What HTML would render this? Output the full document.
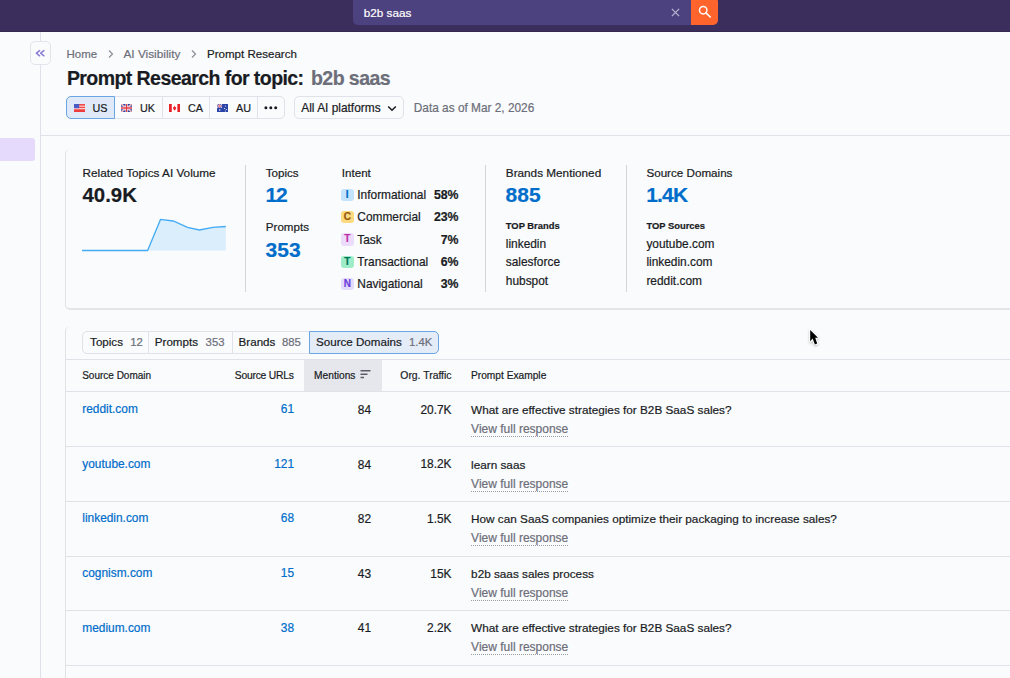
<!DOCTYPE html><html><head><meta charset="utf-8"><style>
    html,body{margin:0;padding:0;width:1010px;height:678px;overflow:hidden;background:#fafbfd;font-family:"Liberation Sans",sans-serif;}
    .t{position:absolute;line-height:1;white-space:nowrap;-webkit-text-stroke:0.2px currentColor;}
    .r{position:absolute;box-sizing:border-box;}
    svg{position:absolute;}
    </style></head><body>
    <div class="r" style="left:0px;top:0px;width:1010px;height:32px;background:#3b2e5d;"></div>
<div class="r" style="left:0px;top:31px;width:1010px;height:1px;background:#34284f;"></div>
<div class="r" style="left:353px;top:-5px;width:365px;height:29.7px;background:#4d4280;border-radius:5px;"></div>
<div class="r" style="left:691px;top:-3px;width:27px;height:27.7px;background:#ff642d;border-radius:0 5px 5px 0;"></div>
<div class="t" style="top:6.50px;font-size:11.7px;color:#ffffff;left:363.80px;">b2b saas</div>
<svg style="left:671px;top:8px" width="9" height="9" viewBox="0 0 9 9"><path d="M0.9 0.9L8.1 8.1M8.1 0.9L0.9 8.1" stroke="#b7b3cc" stroke-width="1.3"/></svg>
<svg style="left:697px;top:4px" width="16" height="16" viewBox="0 0 16 16"><circle cx="6.2" cy="6.2" r="3.7" fill="none" stroke="#fff" stroke-width="1.5"/><path d="M8.9 8.9L13.3 13" stroke="#fff" stroke-width="1.6" stroke-linecap="round"/></svg>
<div class="r" style="left:40px;top:32px;width:1px;height:646px;background:#e0e1e9;"></div>
<div class="r" style="left:0px;top:138px;width:35px;height:22.5px;background:#e5dafc;border-radius:0 3px 3px 0;"></div>
<div class="r" style="left:30px;top:41px;width:20.5px;height:24px;background:#fafbfd;border:1px solid #e3e4eb;border-radius:5px;"></div>
<svg style="left:34px;top:47px" width="12" height="12" viewBox="0 0 12 12"><path d="M5.6 3.6L2.4 6.2L5.6 8.8M9.9 3.6L6.7 6.2L9.9 8.8" fill="none" stroke="#8c7cd6" stroke-width="1.5" stroke-linecap="round" stroke-linejoin="round"/></svg>
<div class="t" style="top:48.60px;font-size:11.45px;color:#6c6e79;left:66.60px;">Home</div>
<svg style="left:107px;top:49px" width="8" height="10" viewBox="0 0 8 10"><path d="M2 1.5L5.5 5L2 8.5" fill="none" stroke="#8b8d98" stroke-width="1.2"/></svg>
<div class="t" style="top:48.60px;font-size:11.8px;color:#6c6e79;left:123.50px;">AI Visibility</div>
<svg style="left:190px;top:49px" width="8" height="10" viewBox="0 0 8 10"><path d="M2 1.5L5.5 5L2 8.5" fill="none" stroke="#8b8d98" stroke-width="1.2"/></svg>
<div class="t" style="top:48.60px;font-size:11.55px;color:#191b23;left:207.00px;">Prompt Research</div>
<div class="t" style="top:69.40px;font-size:19.5px;color:#191b23;font-weight:700;letter-spacing:-0.567px;left:66.90px;">Prompt Research for topic:</div>
<div class="t" style="top:69.40px;font-size:19.53px;color:#6c6e79;font-weight:700;letter-spacing:-0.569px;left:311.00px;">b2b saas</div>
<div class="r" style="left:66px;top:96px;width:219px;height:23px;border:1px solid #e0e1e9;border-radius:5px;background:#fafbfd;"></div>
<div class="r" style="left:66px;top:96px;width:48.5px;height:23px;border:1px solid #6aa5e4;border-radius:5px 0 0 5px;background:#dfe9f8;"></div>
<div class="r" style="left:162px;top:97px;width:1px;height:21px;background:#e0e1e9;"></div>
<div class="r" style="left:209px;top:97px;width:1px;height:21px;background:#e0e1e9;"></div>
<div class="r" style="left:257px;top:97px;width:1px;height:21px;background:#e0e1e9;"></div>
<svg style="left:73.5px;top:104px" width="11.2" height="8" viewBox="0 0 12 8" preserveAspectRatio="none"><rect width="12" height="8" fill="#f24a4a"/><rect y="1.6" width="12" height="1.2" fill="#fbd0d0"/><rect y="4" width="12" height="1.2" fill="#fbd0d0"/><rect y="6.4" width="12" height="1.6" fill="#f03a3a"/><rect width="5.5" height="4.2" fill="#4a5bc4"/></svg>
<div class="t" style="top:102.50px;font-size:10.8px;color:#191b23;left:92.50px;">US</div>
<svg style="left:121px;top:104px" width="11.2" height="8" viewBox="0 0 12 8" preserveAspectRatio="none"><rect width="12" height="8" fill="#2b3f9e"/><path d="M0 0L12 8M12 0L0 8" stroke="#fff" stroke-width="1.6"/><path d="M0 0L12 8M12 0L0 8" stroke="#e23b4a" stroke-width="0.6"/><path d="M6 0V8M0 4H12" stroke="#fff" stroke-width="2.4"/><path d="M6 0V8M0 4H12" stroke="#e23b4a" stroke-width="1.3"/></svg>
<div class="t" style="top:102.50px;font-size:10.8px;color:#191b23;left:140.00px;">UK</div>
<svg style="left:169px;top:104px" width="11.2" height="8" viewBox="0 0 12 8" preserveAspectRatio="none"><rect width="12" height="8" fill="#fff"/><rect width="3" height="8" fill="#e8202a"/><rect x="9" width="3" height="8" fill="#e8202a"/><path d="M6 1.6L6.8 3.2L7.8 2.9L7.3 4.6L8 4.8L6.3 6H6.2V7H5.8V6H5.7L4 4.8L4.7 4.6L4.2 2.9L5.2 3.2Z" fill="#e8202a"/></svg>
<div class="t" style="top:102.50px;font-size:10.8px;color:#191b23;left:188.00px;">CA</div>
<svg style="left:217px;top:104px" width="11.2" height="8" viewBox="0 0 12 8" preserveAspectRatio="none"><rect width="12" height="8" fill="#2a43a8"/><rect width="5.5" height="4" fill="#2a43a8"/><path d="M0 0L5.5 4M5.5 0L0 4" stroke="#fff" stroke-width="0.8"/><path d="M2.75 0V4M0 2H5.5" stroke="#fff" stroke-width="1.2"/><path d="M2.75 0V4M0 2H5.5" stroke="#e23b4a" stroke-width="0.6"/><circle cx="3" cy="6" r="0.8" fill="#fff"/><circle cx="9" cy="2" r="0.6" fill="#fff"/><circle cx="8" cy="4.5" r="0.6" fill="#fff"/><circle cx="10" cy="5.5" r="0.6" fill="#fff"/><circle cx="9" cy="7" r="0.6" fill="#fff"/></svg>
<div class="t" style="top:102.50px;font-size:10.8px;color:#191b23;left:236.00px;">AU</div>
<svg style="left:263px;top:105px" width="15" height="6" viewBox="0 0 15 6"><circle cx="2.9" cy="2.8" r="1.5" fill="#191b23"/><circle cx="7.8" cy="2.8" r="1.5" fill="#191b23"/><circle cx="12.7" cy="2.8" r="1.5" fill="#191b23"/></svg>
<div class="r" style="left:294px;top:96px;width:110px;height:22.6px;border:1px solid #e0e1e9;border-radius:5px;"></div>
<div class="t" style="top:102.50px;font-size:11.9px;color:#191b23;left:301.30px;">All AI platforms</div>
<svg style="left:387px;top:105px" width="10" height="7" viewBox="0 0 10 7"><path d="M1.2 1.5L5 5.2L8.8 1.5" fill="none" stroke="#191b23" stroke-width="1.5"/></svg>
<div class="t" style="top:102.80px;font-size:11.85px;color:#6c6e79;left:413.80px;">Data as of Mar 2, 2026</div>
<div class="r" style="left:40px;top:135px;width:970px;height:1px;background:#e0e1e9;"></div>
<div class="r" style="left:65px;top:149px;width:1000px;height:161px;background:#fafbfd;border-radius:5px;border-left:1px solid #e1e2e8;border-bottom:2px solid #e4e5ea;"></div>
<div class="t" style="top:166.60px;font-size:11.75px;color:#191b23;left:82.60px;">Related Topics AI Volume</div>
<div class="t" style="top:184.50px;font-size:20.4px;color:#191b23;font-weight:700;left:82.50px;">40.9K</div>
<svg style="left:80px;top:215px" width="150" height="40" viewBox="0 0 150 40"><polygon points="2.0,35.5 67.6,35.5 80.5,4.4 93.2,6.0 107.5,12.3 119.4,15.0 132.9,12.3 145.8,11.5 145.8,35.5 2.0,35.5" fill="#daeefc"/><polyline points="2.0,35.5 67.6,35.5 80.5,4.4 93.2,6.0 107.5,12.3 119.4,15.0 132.9,12.3 145.8,11.5" fill="none" stroke="#43abf5" stroke-width="1.3"/></svg>
<div class="r" style="left:245px;top:165px;width:1px;height:127px;background:#d4d5dc;"></div>
<div class="r" style="left:485px;top:165px;width:1px;height:127px;background:#d4d5dc;"></div>
<div class="r" style="left:626px;top:165px;width:1px;height:127px;background:#d4d5dc;"></div>
<div class="t" style="top:166.50px;font-size:11.6px;color:#191b23;left:265.80px;">Topics</div>
<div class="t" style="top:183.70px;font-size:21.0px;color:#006dca;font-weight:700;letter-spacing:-1.200px;left:265.60px;">12</div>
<div class="t" style="top:221.30px;font-size:11.6px;color:#191b23;left:265.80px;">Prompts</div>
<div class="t" style="top:239.00px;font-size:21.0px;color:#006dca;font-weight:700;left:265.60px;">353</div>
<div class="t" style="top:166.50px;font-size:11.6px;color:#191b23;left:341.80px;">Intent</div>
<div class="r" style="left:341px;top:188.5px;width:12.5px;height:12.5px;background:#c4e3fd;border-radius:3px;"></div>
<div class="t" style="left:341px;width:12.5px;text-align:center;top:188.5px;height:12.5px;line-height:12.5px;font-size:10px;font-weight:700;color:#0068c9;">I</div>
<div class="t" style="top:190.00px;font-size:11.9px;color:#191b23;left:357.30px;">Informational</div>
<div class="t" style="top:189.00px;font-size:12.3px;color:#191b23;font-weight:700;right:551.50px;">58%</div>
<div class="r" style="left:341px;top:210.8px;width:12.5px;height:12.5px;background:#fdd97f;border-radius:3px;"></div>
<div class="t" style="left:341px;width:12.5px;text-align:center;top:210.8px;height:12.5px;line-height:12.5px;font-size:10px;font-weight:700;color:#93580a;">C</div>
<div class="t" style="top:212.30px;font-size:11.9px;color:#191b23;left:357.30px;">Commercial</div>
<div class="t" style="top:211.30px;font-size:12.3px;color:#191b23;font-weight:700;right:551.50px;">23%</div>
<div class="r" style="left:341px;top:233.3px;width:12.5px;height:12.5px;background:#ecdcfb;border-radius:3px;"></div>
<div class="t" style="left:341px;width:12.5px;text-align:center;top:233.3px;height:12.5px;line-height:12.5px;font-size:10px;font-weight:700;color:#c12fa5;">T</div>
<div class="t" style="top:234.80px;font-size:11.9px;color:#191b23;left:357.30px;">Task</div>
<div class="t" style="top:233.80px;font-size:12.3px;color:#191b23;font-weight:700;right:551.50px;">7%</div>
<div class="r" style="left:341px;top:255.8px;width:12.5px;height:12.5px;background:#9eecc8;border-radius:3px;"></div>
<div class="t" style="left:341px;width:12.5px;text-align:center;top:255.8px;height:12.5px;line-height:12.5px;font-size:10px;font-weight:700;color:#007255;">T</div>
<div class="t" style="top:257.30px;font-size:11.9px;color:#191b23;left:357.30px;">Transactional</div>
<div class="t" style="top:256.30px;font-size:12.3px;color:#191b23;font-weight:700;right:551.50px;">6%</div>
<div class="r" style="left:341px;top:277.8px;width:12.5px;height:12.5px;background:#e3dcfc;border-radius:3px;"></div>
<div class="t" style="left:341px;width:12.5px;text-align:center;top:277.8px;height:12.5px;line-height:12.5px;font-size:10px;font-weight:700;color:#6e3fe0;">N</div>
<div class="t" style="top:279.30px;font-size:11.9px;color:#191b23;left:357.30px;">Navigational</div>
<div class="t" style="top:278.30px;font-size:12.3px;color:#191b23;font-weight:700;right:551.50px;">3%</div>
<div class="t" style="top:166.50px;font-size:11.75px;color:#191b23;left:505.80px;">Brands Mentioned</div>
<div class="t" style="top:183.70px;font-size:21.0px;color:#006dca;font-weight:700;left:505.60px;">885</div>
<div class="t" style="top:221.20px;font-size:9.4px;color:#191b23;font-weight:700;left:505.80px;">TOP Brands</div>
<div class="t" style="top:238.80px;font-size:11.9px;color:#191b23;left:505.80px;">linkedin</div>
<div class="t" style="top:257.40px;font-size:11.9px;color:#191b23;left:505.80px;">salesforce</div>
<div class="t" style="top:276.00px;font-size:11.9px;color:#191b23;left:505.80px;">hubspot</div>
<div class="t" style="top:166.50px;font-size:11.65px;color:#191b23;left:646.40px;">Source Domains</div>
<div class="t" style="top:183.70px;font-size:21.0px;color:#006dca;font-weight:700;letter-spacing:-0.800px;left:646.20px;">1.4K</div>
<div class="t" style="top:221.20px;font-size:9.4px;color:#191b23;font-weight:700;left:646.40px;">TOP Sources</div>
<div class="t" style="top:238.80px;font-size:11.9px;color:#191b23;left:646.40px;">youtube.com</div>
<div class="t" style="top:257.40px;font-size:11.9px;color:#191b23;left:646.40px;">linkedin.com</div>
<div class="t" style="top:276.00px;font-size:11.9px;color:#191b23;left:646.40px;">reddit.com</div>
<div class="r" style="left:65px;top:326px;width:1000px;height:400px;background:#fafbfd;border-radius:5px;border-left:1px solid #e1e2e8;"></div>
<div class="r" style="left:82px;top:331px;width:357px;height:22.5px;border:1px solid #e0e1e9;border-radius:5px;"></div>
<div class="r" style="left:147.5px;top:332px;width:1px;height:20.5px;background:#e0e1e9;"></div>
<div class="r" style="left:231.5px;top:332px;width:1px;height:20.5px;background:#e0e1e9;"></div>
<div class="r" style="left:309px;top:331px;width:129.5px;height:22.5px;border:1px solid #6aa5e4;border-radius:0 5px 5px 0;background:#e4ecf8;"></div>
<div class="t" style="top:336.40px;font-size:11.6px;color:#191b23;left:90.10px;">Topics</div>
<div class="t" style="top:337.40px;font-size:11.3px;color:#6c6e79;left:130.20px;">12</div>
<div class="t" style="top:336.40px;font-size:11.6px;color:#191b23;left:154.80px;">Prompts</div>
<div class="t" style="top:337.40px;font-size:11.3px;color:#6c6e79;left:205.60px;">353</div>
<div class="t" style="top:336.40px;font-size:11.6px;color:#191b23;left:238.60px;">Brands</div>
<div class="t" style="top:337.40px;font-size:11.3px;color:#6c6e79;left:282.00px;">885</div>
<div class="t" style="top:336.40px;font-size:11.6px;color:#191b23;left:316.00px;">Source Domains</div>
<div class="t" style="top:337.40px;font-size:11.3px;color:#6c6e79;left:409.00px;">1.4K</div>
<div class="r" style="left:65px;top:359px;width:945px;height:1px;background:#e0e1e9;"></div>
<div class="r" style="left:304px;top:360px;width:78px;height:31px;background:#e6e7ed;"></div>
<div class="r" style="left:65px;top:391px;width:945px;height:1px;background:#e0e1e9;"></div>
<div class="t" style="top:370.80px;font-size:10.0px;color:#191b23;left:82.20px;">Source Domain</div>
<div class="t" style="top:370.80px;font-size:10.3px;color:#191b23;letter-spacing:-0.220px;right:716.42px;">Source URLs</div>
<div class="t" style="top:370.80px;font-size:10.2px;color:#191b23;left:314.10px;">Mentions</div>
<svg style="left:360px;top:369px" width="12" height="10" viewBox="0 0 12 10"><path d="M0.5 1.8H10.5M0.5 5.2H7.5M0.5 8.6H4" stroke="#5b5d68" stroke-width="1.5"/></svg>
<div class="t" style="top:370.80px;font-size:10.4px;color:#191b23;right:558.50px;">Org. Traffic</div>
<div class="t" style="top:370.80px;font-size:10.2px;color:#191b23;left:471.00px;">Prompt Example</div>
<div class="t" style="top:404.20px;font-size:11.9px;color:#006dca;left:82.30px;">reddit.com</div>
<div class="t" style="top:404.20px;font-size:11.9px;color:#006dca;right:716.00px;">61</div>
<div class="t" style="top:405.00px;font-size:11.9px;color:#191b23;right:639.00px;">84</div>
<div class="t" style="top:404.70px;font-size:11.9px;color:#191b23;right:558.50px;">20.7K</div>
<div class="t" style="top:403.90px;font-size:11.75px;color:#191b23;left:471.10px;">What are effective strategies for B2B SaaS sales?</div>
<div class="t" style="top:423.00px;font-size:12.0px;color:#6c6e79;left:471.10px;border-bottom:1px dotted #9a9ca6;padding-bottom:1px;">View full response</div>
<div class="r" style="left:65px;top:446px;width:945px;height:1px;background:#e0e1e9;"></div>
<div class="t" style="top:458.80px;font-size:11.9px;color:#006dca;left:82.30px;">youtube.com</div>
<div class="t" style="top:458.80px;font-size:11.9px;color:#006dca;right:716.00px;">121</div>
<div class="t" style="top:459.60px;font-size:11.9px;color:#191b23;right:639.00px;">84</div>
<div class="t" style="top:459.30px;font-size:11.9px;color:#191b23;right:558.50px;">18.2K</div>
<div class="t" style="top:458.50px;font-size:11.75px;color:#191b23;left:471.10px;">learn saas</div>
<div class="t" style="top:477.60px;font-size:12.0px;color:#6c6e79;left:471.10px;border-bottom:1px dotted #9a9ca6;padding-bottom:1px;">View full response</div>
<div class="r" style="left:65px;top:501px;width:945px;height:1px;background:#e0e1e9;"></div>
<div class="t" style="top:513.40px;font-size:11.9px;color:#006dca;left:82.30px;">linkedin.com</div>
<div class="t" style="top:513.40px;font-size:11.9px;color:#006dca;right:716.00px;">68</div>
<div class="t" style="top:514.20px;font-size:11.9px;color:#191b23;right:639.00px;">82</div>
<div class="t" style="top:513.90px;font-size:11.9px;color:#191b23;right:558.50px;">1.5K</div>
<div class="t" style="top:513.10px;font-size:11.75px;color:#191b23;left:471.10px;">How can SaaS companies optimize their packaging to increase sales?</div>
<div class="t" style="top:532.20px;font-size:12.0px;color:#6c6e79;left:471.10px;border-bottom:1px dotted #9a9ca6;padding-bottom:1px;">View full response</div>
<div class="r" style="left:65px;top:556px;width:945px;height:1px;background:#e0e1e9;"></div>
<div class="t" style="top:568.00px;font-size:11.9px;color:#006dca;left:82.30px;">cognism.com</div>
<div class="t" style="top:568.00px;font-size:11.9px;color:#006dca;right:716.00px;">15</div>
<div class="t" style="top:568.80px;font-size:11.9px;color:#191b23;right:639.00px;">43</div>
<div class="t" style="top:568.50px;font-size:11.9px;color:#191b23;right:558.50px;">15K</div>
<div class="t" style="top:567.70px;font-size:11.75px;color:#191b23;left:471.10px;">b2b saas sales process</div>
<div class="t" style="top:586.80px;font-size:12.0px;color:#6c6e79;left:471.10px;border-bottom:1px dotted #9a9ca6;padding-bottom:1px;">View full response</div>
<div class="r" style="left:65px;top:610px;width:945px;height:1px;background:#e0e1e9;"></div>
<div class="t" style="top:622.60px;font-size:11.9px;color:#006dca;left:82.30px;">medium.com</div>
<div class="t" style="top:622.60px;font-size:11.9px;color:#006dca;right:716.00px;">38</div>
<div class="t" style="top:623.40px;font-size:11.9px;color:#191b23;right:639.00px;">41</div>
<div class="t" style="top:623.10px;font-size:11.9px;color:#191b23;right:558.50px;">2.2K</div>
<div class="t" style="top:622.30px;font-size:11.75px;color:#191b23;left:471.10px;">What are effective strategies for B2B SaaS sales?</div>
<div class="t" style="top:641.40px;font-size:12.0px;color:#6c6e79;left:471.10px;border-bottom:1px dotted #9a9ca6;padding-bottom:1px;">View full response</div>
<div class="r" style="left:65px;top:665px;width:945px;height:1px;background:#e0e1e9;"></div>
<svg style="left:806px;top:326px;filter:drop-shadow(0 1px 1px rgba(0,0,0,0.25))" width="18" height="22" viewBox="0 0 18 22"><path d="M4.2 4V15.6L6.6 12.6L8.9 18.4L11.2 17.6L9.2 11.8H12Z" fill="#000" stroke="#fff" stroke-width="2" stroke-linejoin="round" paint-order="stroke"/></svg>
</body></html>
